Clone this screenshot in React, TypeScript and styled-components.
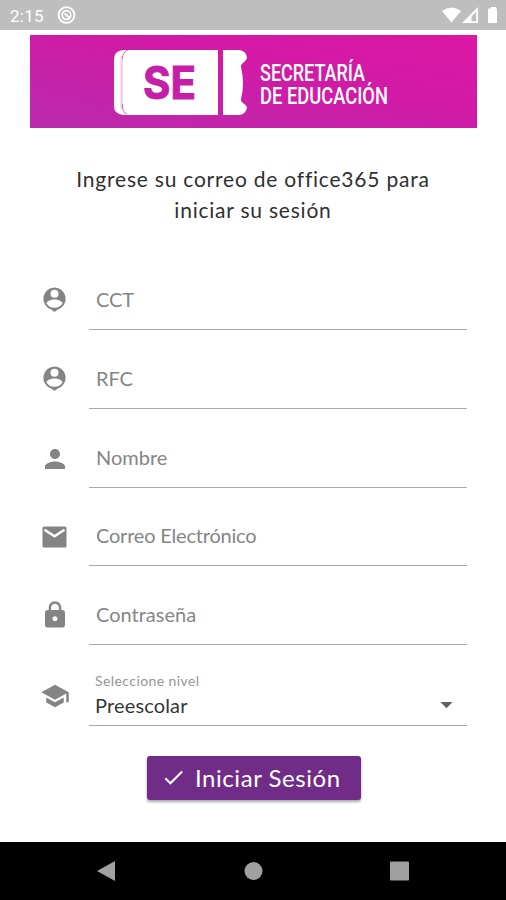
import React from "react";
import styled, { createGlobalStyle } from "styled-components";
import { MdPerson, MdLock, MdSchool, MdCheck, MdArrowDropDown } from "react-icons/md";

const Global = createGlobalStyle`
  * { box-sizing: border-box; }
  body { margin: 0; background: #fff; }
`;

const Screen = styled.div`
  width: 506px;
  height: 900px;
  display: flex;
  flex-direction: column;
  overflow: hidden;
  background: #fff;
  font-family: Lato, sans-serif;
`;

const StatusBar = styled.header`
  height: 30px;
  flex: none;
  display: flex;
  align-items: center;
  padding: 1px 8px 0 10px;
  background: #bebebe;
  color: #fff;
  font: 400 17px Roboto, sans-serif;
`;

const Clock = styled.span`
  width: 47px;
  letter-spacing: 0.25px;
`;

const StatusIcons = styled.svg`
  margin-left: auto;
`;

const Banner = styled.div`
  flex: none;
  width: 447px;
  height: 93px;
  margin: 5px 0 0 30px;
  padding: 15px 0 0 84px;
  display: flex;
  background: linear-gradient(192deg, #dc17a5 0%, #d01ba7 45%, #b92bae 100%);
`;

const BannerText = styled.svg`
  margin-left: 12px;
  overflow: visible;
`;

const Prompt = styled.h1`
  margin: 0;
  font-size: 21px;
  line-height: 31px;
  font-weight: 400;
  text-align: center;
  color: #303030;
  white-space: nowrap;
  letter-spacing: 0.78px;
`;

const Heading = styled.div`
  margin-top: 35px;
  height: 62px;
  flex: none;
`;

const Form = styled.form`
  margin: 44px 39px 0 40px;
  display: flex;
  flex-direction: column;
  flex: 1;
`;

const Row = styled.div<{ $height: number }>`
  height: ${(p) => p.$height}px;
  display: flex;
  flex: none;
  align-items: flex-end;
`;

const IconSlot = styled.span<{ $bottom: number }>`
  width: 49px;
  display: flex;
  padding-bottom: ${(p) => p.$bottom}px;
  color: #848484;
`;

const Field = styled.div`
  flex: 1;
  height: 60px;
  padding: 0 6px 14px 7px;
  display: flex;
  flex-direction: column;
  justify-content: flex-end;
  border-bottom: 1.5px solid #a9a9a9;
`;

const Label = styled.span<{ $gap: number }>`
  font-size: 20px;
  line-height: 31px;
  color: #858585;
  letter-spacing: ${(p) => p.$gap}px;
`;

const SelectField = styled(Field)`
  padding: 0 6px 6px;
`;

const SmallLabel = styled.span`
  font-size: 14px;
  line-height: 18px;
  letter-spacing: 0.42px;
  color: #959595;
`;

const Value = styled.div`
  display: flex;
  align-items: center;
  justify-content: space-between;
  height: 29px;
  font-size: 20px;
  letter-spacing: 0.15px;
  color: #363636;
  svg { color: #616161; }
`;

const Submit = styled.button`
  width: 214px;
  height: 44px;
  margin: 30px 0 0 107px;
  padding: 0 0 2px 14px;
  display: flex;
  align-items: center;
  gap: 9px;
  border: 0;
  border-radius: 3px;
  background: #702c86;
  color: #fff;
  font: 400 24px Lato, sans-serif;
  letter-spacing: 0.55px;
  box-shadow: 0 2px 3px rgba(0, 0, 0, 0.35);
`;

const NavBar = styled.nav`
  height: 58px;
  flex: none;
  display: flex;
  align-items: center;
  justify-content: space-between;
  padding: 0 96px;
  background: #000;
`;

const PersonBadge = () => (
  <svg width="29" height="29" viewBox="0 0 29 29" fill="currentColor">
    <path fillRule="evenodd" d="M14.500 2.500a11.200 11.200 0 0 0-3.300 21.900L14.500 27l3.300-2.600A11.200 11.200 0 0 0 14.500 2.500Zm0 2.300a4 4 0 1 1 0 8 4 4 0 0 1 0-8Zm0 9.700c4 0 8 1.700 8 4-1.600 2.700-4.500 4.300-8 4.300s-6.400-1.600-8-4.300c0-2.300 4-4 8-4Z" />
  </svg>
);

const Envelope = () => (
  <svg width="30" height="30" viewBox="0 0 30 30" fill="currentColor">
    <path d="M4 4.500h21a1.500 1.500 0 0 1 1.500 1.500v18a1.500 1.500 0 0 1-1.500 1.500H4A1.500 1.500 0 0 1 2.500 24V6A1.500 1.500 0 0 1 4 4.500Z" />
    <path d="m4.500 7.800 10 6.500 10-6.500" fill="none" stroke="#fff" strokeWidth="2.500" />
  </svg>
);

const fields = [
  { label: "CCT", icon: <PersonBadge />, gap: -0.1, bottom: 16 },
  { label: "RFC", icon: <PersonBadge />, gap: -0.1, bottom: 16 },
  { label: "Nombre", icon: <MdPerson size={30} />, gap: 0, bottom: 14 },
  { label: "Correo Electrónico", icon: <Envelope />, gap: -0.2, bottom: 14 },
  { label: "Contraseña", icon: <MdLock size={30} />, gap: 0, bottom: 15 },
];

export default function App() {
  return (
    <Screen>
      <Global />
      <StatusBar>
        <Clock>2:15</Clock>
        <svg width="19" height="19" viewBox="0 0 19 19" fill="none" stroke="#fff">
          <circle cx="9.5" cy="9" r="7.900" strokeWidth="1.9" />
          <circle cx="9.5" cy="9" r="4.300" strokeWidth="1.7" />
          <path d="m7.500 7.500 5 4" strokeWidth="1.800" />
        </svg>
        <StatusIcons width="56" height="17" viewBox="0 0 56 17" fill="#fff">
          <path d="M0 4Q9.500-3 19 4L9.500 15.500Z" />
          <path fillRule="evenodd" d="M36 0v16H20ZM34.200 4.800 29.500 9.500V14.200h4.700Z" />
          <path d="M47 1.500h2V0h5v1.500h1V16h-9V1.500Z" />
        </StatusIcons>
      </StatusBar>
      <Banner>
        <svg width="134" height="66" viewBox="0 0 134 66">
          <path fill="#fff" d="M9 0Q0 1 0 9v47q0 8 9 9h6V0Z" />
          <path fill="#efcbe9" d="M6.500 6h2.300v53H6.500Z" />
          <path fill="#fff" d="M15 0h89v65H15q-6-2-6-9V9q0-7 6-9Z" />
          <path fill="none" stroke="#dc55ae" strokeWidth=".9" d="M14 0Q8.500 2 8.500 9v47q0 7 5.500 9" strokeDasharray="11 45 12" />
          <path fill="#fff" d="M109 0h16q7 1 8 7c0 5-7 6-6 10q4 16 0 32c-1 4 6 5 6 9q-2 7-8 7h-16Z" />
          <text x="29" y="49" textLength="53" lengthAdjust="spacingAndGlyphs" fill="#c51fa8" stroke="#c51fa8" strokeWidth="1" fontFamily="Inter, sans-serif" fontWeight="700" fontSize="45">SE</text>
        </svg>
        <BannerText width="132" height="66" fill="#fff" fontFamily="Roboto, sans-serif" fontWeight="500" fontSize="24.5">
          <text y="31" textLength="105" lengthAdjust="spacingAndGlyphs">SECRETARÍA</text>
          <text y="54" textLength="128" lengthAdjust="spacingAndGlyphs">DE EDUCACIÓN</text>
        </BannerText>
      </Banner>
      <Heading>
        <Prompt>Ingrese su correo de office365 para</Prompt>
        <Prompt>iniciar su sesión</Prompt>
      </Heading>
      <Form>
        {fields.map((f, i) => (
          <Row key={f.label} $height={i === 0 ? 61 : 78.8}>
            <IconSlot $bottom={f.bottom}>{f.icon}</IconSlot>
            <Field><Label $gap={f.gap}>{f.label}</Label></Field>
          </Row>
        ))}
        <Row $height={81}>
          <IconSlot $bottom={15}><MdSchool size={30} /></IconSlot>
          <SelectField>
            <SmallLabel>Seleccione nivel</SmallLabel>
            <Value>Preescolar<MdArrowDropDown size={29} /></Value>
          </SelectField>
        </Row>
        <Submit type="button"><MdCheck size={25} />Iniciar Sesión</Submit>
      </Form>
      <NavBar>
        <svg width="20" height="22"><path d="M1 11 19 1v20Z" fill="#a0a0a0" /></svg>
        <svg width="20" height="20"><circle cx="10.5" cy="10" r="9" fill="#a0a0a0" /></svg>
        <svg width="20" height="20"><rect x="0" y=".5" width="19" height="19" rx="1" fill="#a0a0a0" /></svg>
      </NavBar>
    </Screen>
  );
}
